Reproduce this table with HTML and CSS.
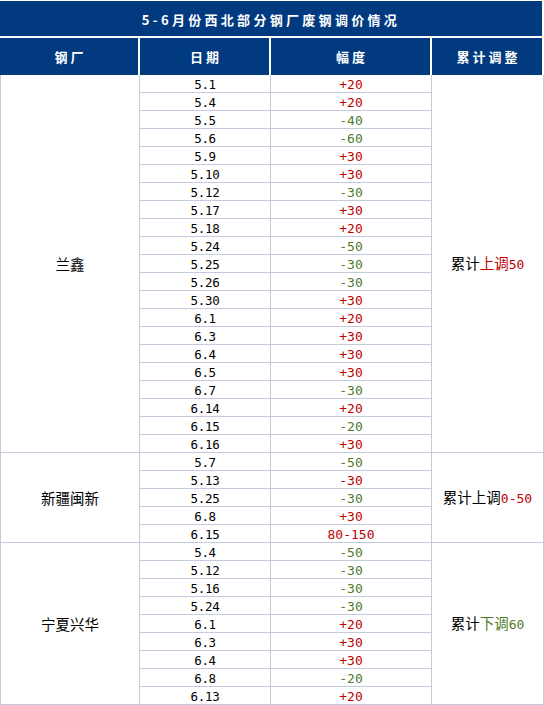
FILE: index.html
```html
<!DOCTYPE html>
<html lang="zh-CN">
<head>
<meta charset="utf-8">
<title>5-6月份西北部分钢厂废钢调价情况</title>
<link rel="stylesheet" href="styles.css">
</head>
<body>
<div class="title">5-6月份西北部分钢厂废钢调价情况</div>
<table class="tbl">
  <colgroup>
    <col class="c1"><col class="c2"><col class="c3"><col class="c4">
  </colgroup>
  <thead>
    <tr class="head">
      <th>钢厂</th><th>日期</th><th>幅度</th><th>累计调整</th>
    </tr>
  </thead>
  <tbody>
    <tr><td class="name" rowspan="21">兰鑫</td><td class="d">5.1</td><td class="v up">+20</td><td class="sum" rowspan="21">累计<span class="up">上调</span><span class="num up">50</span></td></tr>
    <tr><td class="d">5.4</td><td class="v up">+20</td></tr>
    <tr><td class="d">5.5</td><td class="v dn">-40</td></tr>
    <tr><td class="d">5.6</td><td class="v dn">-60</td></tr>
    <tr><td class="d">5.9</td><td class="v up">+30</td></tr>
    <tr><td class="d">5.10</td><td class="v up">+30</td></tr>
    <tr><td class="d">5.12</td><td class="v dn">-30</td></tr>
    <tr><td class="d">5.17</td><td class="v up">+30</td></tr>
    <tr><td class="d">5.18</td><td class="v up">+20</td></tr>
    <tr><td class="d">5.24</td><td class="v dn">-50</td></tr>
    <tr><td class="d">5.25</td><td class="v dn">-30</td></tr>
    <tr><td class="d">5.26</td><td class="v dn">-30</td></tr>
    <tr><td class="d">5.30</td><td class="v up">+30</td></tr>
    <tr><td class="d">6.1</td><td class="v up">+20</td></tr>
    <tr><td class="d">6.3</td><td class="v up">+30</td></tr>
    <tr><td class="d">6.4</td><td class="v up">+30</td></tr>
    <tr><td class="d">6.5</td><td class="v up">+30</td></tr>
    <tr><td class="d">6.7</td><td class="v dn">-30</td></tr>
    <tr><td class="d">6.14</td><td class="v up">+20</td></tr>
    <tr><td class="d">6.15</td><td class="v dn">-20</td></tr>
    <tr><td class="d">6.16</td><td class="v up">+30</td></tr>

    <tr><td class="name" rowspan="5">新疆闽新</td><td class="d">5.7</td><td class="v dn">-50</td><td class="sum" rowspan="5">累计上调<span class="num up">0-50</span></td></tr>
    <tr><td class="d">5.13</td><td class="v up">-30</td></tr>
    <tr><td class="d">5.25</td><td class="v dn">-30</td></tr>
    <tr><td class="d">6.8</td><td class="v up">+30</td></tr>
    <tr><td class="d">6.15</td><td class="v up">80-150</td></tr>

    <tr><td class="name" rowspan="9">宁夏兴华</td><td class="d">5.4</td><td class="v dn">-50</td><td class="sum" rowspan="9">累计<span class="dn">下调</span><span class="num dn">60</span></td></tr>
    <tr><td class="d">5.12</td><td class="v dn">-30</td></tr>
    <tr><td class="d">5.16</td><td class="v dn">-30</td></tr>
    <tr><td class="d">5.24</td><td class="v dn">-30</td></tr>
    <tr><td class="d">6.1</td><td class="v up">+20</td></tr>
    <tr><td class="d">6.3</td><td class="v up">+30</td></tr>
    <tr><td class="d">6.4</td><td class="v up">+30</td></tr>
    <tr><td class="d">6.8</td><td class="v dn">-20</td></tr>
    <tr><td class="d">6.13</td><td class="v up">+20</td></tr>
  </tbody>
</table>
</body>
</html>
```

FILE: styles.css
```css
html, body {
  margin: 0;
  padding: 0;
  background: #ffffff;
  overflow: hidden;
}

body {
  width: 544px;
  font-family: "Noto Sans CJK SC", "DejaVu Sans", sans-serif;
  color: #000000;
}

.title {
  box-sizing: border-box;
  width: 542px;
  height: 35px;
  margin-top: 1px;
  margin-bottom: 2px;
  padding-top: 3px;
  background: #023a80;
  color: #ffffff;
  font-size: 13px;
  font-weight: 700;
  line-height: 32px;
  letter-spacing: 3.3px;
  text-align: center;
}

.tbl {
  width: 544px;
  table-layout: fixed;
  border-collapse: separate;
  border-spacing: 0;
}

.c1 { width: 140px; }
.c2 { width: 131px; }
.c3 { width: 161px; }
.c4 { width: 112px; }

.head {
  height: 37px;
}

.head th {
  padding: 0 0 0 3px;
  background: #023a80;
  border-right: 2px solid #ffffff;
  color: #ffffff;
  font-size: 13px;
  font-weight: 700;
  letter-spacing: 3px;
  line-height: 16px;
  text-align: center;
  vertical-align: middle;
}

.tbl tbody tr {
  height: 18px;
}

.tbl td {
  padding: 1px 0 0 0;
  border-right: 1px solid #c3cadb;
  border-bottom: 1px solid #c3cadb;
  line-height: 15px;
  text-align: center;
  vertical-align: middle;
  white-space: nowrap;
}

.tbl td.name {
  border-left: 1px solid #c3cadb;
  font-size: 14.5px;
  padding-top: 0;
}

.tbl td.d {
  font-family: "DejaVu Sans Mono", "Liberation Mono", monospace;
  font-size: 12.5px;
  letter-spacing: -0.3px;
}

.tbl td.v {
  font-family: "DejaVu Sans Mono", "Liberation Mono", monospace;
  font-size: 13px;
}

.tbl td.sum {
  font-size: 14.5px;
  padding-top: 0;
}

.num {
  font-family: "DejaVu Sans Mono", "Liberation Mono", monospace;
  font-size: 13px;
}

.up { color: #c00000; }
.dn { color: #4e7a2a; }
```
